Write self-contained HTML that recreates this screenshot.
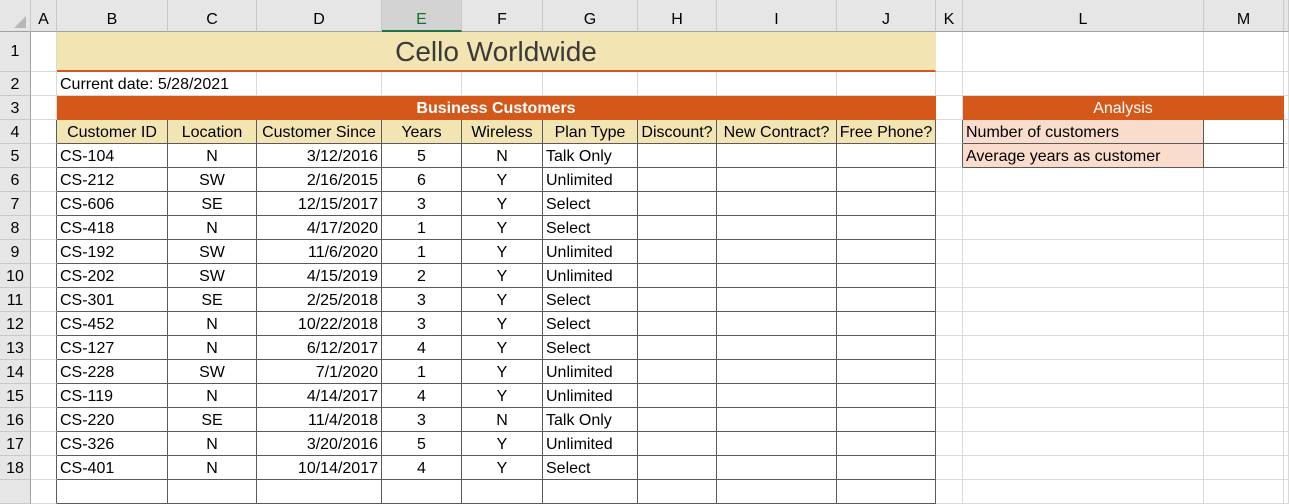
<!DOCTYPE html>
<html><head><meta charset="utf-8"><style>
body{margin:0;width:1289px;height:484px;overflow:hidden;background:#fff;font-family:"Liberation Sans",Arial,sans-serif;font-size:16px;color:#000}
table{border-collapse:separate;border-spacing:0;table-layout:fixed;width:1289px}
td{padding:3px 3px 0 3px;border-right:1px solid #d9d9d9;border-bottom:1px solid #d9d9d9;white-space:nowrap;overflow:hidden;box-sizing:border-box;height:24px;line-height:20px;vertical-align:top}
tr.h td{background:#e6e6e6;text-align:center;height:32px;border-right:1px solid #c8c8c8;border-bottom:1px solid #a0a0a0;font-size:16px;padding-top:9px;line-height:22px}
tr.h td.sel{background:#d2d2d2;color:#1e6b3a;border-bottom:2px solid #217346;line-height:21px}
td.rn{background:#e6e6e6;text-align:center;border-right:1px solid #a0a0a0;border-bottom:1px solid #c8c8c8;padding:3px 0 0 0}
.ea{border-right:1px solid #5a5a5a}
.d{border-right:1px solid #5a5a5a;border-bottom:1px solid #5a5a5a}
.c{text-align:center}.r{text-align:right}
.hd{background:#f2e5b3;text-align:center;padding-left:1px;padding-right:1px}
.or{background:#d4581a;color:#fff;font-weight:bold;text-align:center;border-right-color:#d4581a;border-bottom-color:#d4581a}
.an{background:#f9dccb}
</style></head><body>
<table>
<colgroup><col style="width:31px"><col style="width:26px"><col style="width:111px"><col style="width:89px"><col style="width:125px"><col style="width:80px"><col style="width:81px"><col style="width:95px"><col style="width:79px"><col style="width:120px"><col style="width:99px"><col style="width:27px"><col style="width:241px"><col style="width:80px"><col style="width:5px"></colgroup>
<tr class="h"><td style="background:#e6e6e6;padding:0"><svg width="14" height="14" style="display:block;margin-left:12px;margin-top:14px"><polygon points="14,2 14,14 2,14" fill="#b8b8b8"/></svg></td><td>A</td><td>B</td><td>C</td><td>D</td><td class="sel">E</td><td>F</td><td>G</td><td>H</td><td>I</td><td>J</td><td>K</td><td>L</td><td>M</td><td></td></tr>
<tr style="height:40px"><td class="rn" style="height:40px;line-height:38px;padding-top:1px">1</td><td style="height:40px"></td><td colspan="9" style="height:40px;background:#f2e5b3;border-bottom:2px solid #d4581a;border-right:1px solid #f2e5b3;text-align:center;font-size:28px;color:#3a3a3a;line-height:36px;padding-top:2px">Cello Worldwide</td><td style="height:40px"></td><td></td><td></td><td></td></tr>
<tr><td class="rn">2</td><td></td><td colspan="2">Current date: 5/28/2021</td><td></td><td></td><td></td><td></td><td></td><td></td><td></td><td></td><td></td><td></td><td></td></tr>
<tr><td class="rn">3</td><td></td><td colspan="9" class="or">Business Customers</td><td></td><td colspan="2" class="or" style="font-weight:normal">Analysis</td><td></td></tr>
<tr><td class="rn">4</td><td class="ea"></td><td class="d hd">Customer ID</td><td class="d hd">Location</td><td class="d hd">Customer Since</td><td class="d hd">Years</td><td class="d hd">Wireless</td><td class="d hd">Plan Type</td><td class="d hd">Discount?</td><td class="d hd">New Contract?</td><td class="d hd">Free Phone?</td><td class="ea"></td><td class="d an">Number of customers</td><td class="d"></td><td></td></tr>
<tr><td class="rn">5</td><td class="ea"></td><td class="d">CS-104</td><td class="d c">N</td><td class="d r">3/12/2016</td><td class="d c">5</td><td class="d c">N</td><td class="d">Talk Only</td><td class="d"></td><td class="d"></td><td class="d"></td><td class="ea"></td><td class="d an">Average years as customer</td><td class="d"></td><td></td></tr>
<tr><td class="rn">6</td><td class="ea"></td><td class="d">CS-212</td><td class="d c">SW</td><td class="d r">2/16/2015</td><td class="d c">6</td><td class="d c">Y</td><td class="d">Unlimited</td><td class="d"></td><td class="d"></td><td class="d"></td><td></td><td></td><td></td><td></td></tr>
<tr><td class="rn">7</td><td class="ea"></td><td class="d">CS-606</td><td class="d c">SE</td><td class="d r">12/15/2017</td><td class="d c">3</td><td class="d c">Y</td><td class="d">Select</td><td class="d"></td><td class="d"></td><td class="d"></td><td></td><td></td><td></td><td></td></tr>
<tr><td class="rn">8</td><td class="ea"></td><td class="d">CS-418</td><td class="d c">N</td><td class="d r">4/17/2020</td><td class="d c">1</td><td class="d c">Y</td><td class="d">Select</td><td class="d"></td><td class="d"></td><td class="d"></td><td></td><td></td><td></td><td></td></tr>
<tr><td class="rn">9</td><td class="ea"></td><td class="d">CS-192</td><td class="d c">SW</td><td class="d r">11/6/2020</td><td class="d c">1</td><td class="d c">Y</td><td class="d">Unlimited</td><td class="d"></td><td class="d"></td><td class="d"></td><td></td><td></td><td></td><td></td></tr>
<tr><td class="rn">10</td><td class="ea"></td><td class="d">CS-202</td><td class="d c">SW</td><td class="d r">4/15/2019</td><td class="d c">2</td><td class="d c">Y</td><td class="d">Unlimited</td><td class="d"></td><td class="d"></td><td class="d"></td><td></td><td></td><td></td><td></td></tr>
<tr><td class="rn">11</td><td class="ea"></td><td class="d">CS-301</td><td class="d c">SE</td><td class="d r">2/25/2018</td><td class="d c">3</td><td class="d c">Y</td><td class="d">Select</td><td class="d"></td><td class="d"></td><td class="d"></td><td></td><td></td><td></td><td></td></tr>
<tr><td class="rn">12</td><td class="ea"></td><td class="d">CS-452</td><td class="d c">N</td><td class="d r">10/22/2018</td><td class="d c">3</td><td class="d c">Y</td><td class="d">Select</td><td class="d"></td><td class="d"></td><td class="d"></td><td></td><td></td><td></td><td></td></tr>
<tr><td class="rn">13</td><td class="ea"></td><td class="d">CS-127</td><td class="d c">N</td><td class="d r">6/12/2017</td><td class="d c">4</td><td class="d c">Y</td><td class="d">Select</td><td class="d"></td><td class="d"></td><td class="d"></td><td></td><td></td><td></td><td></td></tr>
<tr><td class="rn">14</td><td class="ea"></td><td class="d">CS-228</td><td class="d c">SW</td><td class="d r">7/1/2020</td><td class="d c">1</td><td class="d c">Y</td><td class="d">Unlimited</td><td class="d"></td><td class="d"></td><td class="d"></td><td></td><td></td><td></td><td></td></tr>
<tr><td class="rn">15</td><td class="ea"></td><td class="d">CS-119</td><td class="d c">N</td><td class="d r">4/14/2017</td><td class="d c">4</td><td class="d c">Y</td><td class="d">Unlimited</td><td class="d"></td><td class="d"></td><td class="d"></td><td></td><td></td><td></td><td></td></tr>
<tr><td class="rn">16</td><td class="ea"></td><td class="d">CS-220</td><td class="d c">SE</td><td class="d r">11/4/2018</td><td class="d c">3</td><td class="d c">N</td><td class="d">Talk Only</td><td class="d"></td><td class="d"></td><td class="d"></td><td></td><td></td><td></td><td></td></tr>
<tr><td class="rn">17</td><td class="ea"></td><td class="d">CS-326</td><td class="d c">N</td><td class="d r">3/20/2016</td><td class="d c">5</td><td class="d c">Y</td><td class="d">Unlimited</td><td class="d"></td><td class="d"></td><td class="d"></td><td></td><td></td><td></td><td></td></tr>
<tr><td class="rn">18</td><td class="ea"></td><td class="d">CS-401</td><td class="d c">N</td><td class="d r">10/14/2017</td><td class="d c">4</td><td class="d c">Y</td><td class="d">Select</td><td class="d"></td><td class="d"></td><td class="d"></td><td></td><td></td><td></td><td></td></tr>
<tr><td class="rn"></td><td class="ea"></td><td class="d"></td><td class="d"></td><td class="d"></td><td class="d"></td><td class="d"></td><td class="d"></td><td class="d"></td><td class="d"></td><td class="d"></td><td></td><td></td><td></td><td></td></tr>
</table>
</body></html>
